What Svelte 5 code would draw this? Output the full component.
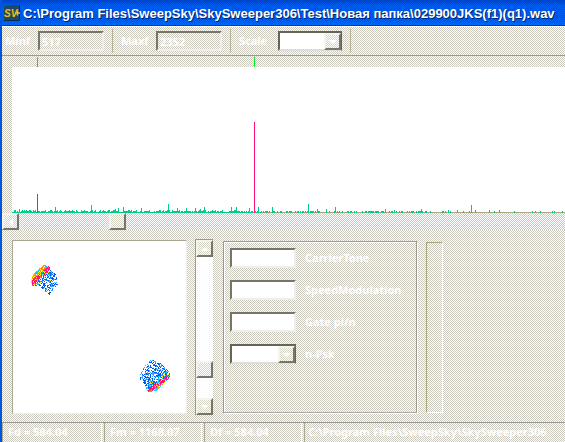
<script>
  const path = 'C:\\Program Files\\SweepSky\\SkySweeper306\\Test\\Новая папка\\029900JKS(f1)(q1).wav';
  const status = ['Fd = 584.04', 'Fm = 1168.07', 'Df = 584.04', 'C:\\Program Files\\SweepSky\\SkySweeper306'];
  const fields = ['CarrierTone', 'SpeedModulation', 'Gate pi/n'];

  function seeded(seed) {
    let s = seed;
    return () => {
      s = (s * 1664525 + 1013904223) % 4294967296;
      return s / 4294967296;
    };
  }

  // Noise floor, one bar per pixel column, with the stronger lines on top
  const peaks = { 7: 4, 43: 6, 79: 8, 83: 3, 97: 3, 103: 4, 106: 5, 111: 6, 129: 5, 156: 9, 165: 5, 174: 5, 183: 5, 188: 4, 192: 6, 219: 6, 224: 6, 237: 5, 246: 6, 260: 6, 296: 9, 305: 4, 314: 4, 323: 6, 373: 4, 382: 3, 409: 4, 436: 3, 445: 3, 459: 8, 463: 3, 477: 3, 487: 3 };
  const rnd = seeded(41);
  const bars = [];
  for (let x = 1; x < 900; x++) {
    const r = rnd();
    let h = x < 250 ? (r < 0.3 ? 1 : r < 0.8 ? 2 : 3) : x < 420 ? (r < 0.45 ? 2 : 0) : r < 0.13 ? 2 : 0;
    if (peaks[x]) h = peaks[x];
    if (h) bars.push({ x, h });
  }

  // Each cloud: an outline, a hot edge and a scatter that thins out away from it
  function inside(poly, x, y) {
    let hit = false;
    for (let i = 0, j = poly.length - 1; i < poly.length; j = i++) {
      const [a, b] = poly[i];
      const [c, d] = poly[j];
      if (b > y !== d > y && x < ((c - a) * (y - b)) / (d - b) + a) hit = !hit;
    }
    return hit;
  }
  function cloud(poly, ax, ay, bx, by, seed) {
    const rand = seeded(seed);
    const out = [];
    const len = Math.hypot(bx - ax, by - ay);
    for (let y = 20; y < 156; y++) {
      for (let x = 14; x < 164; x++) {
        if (!inside(poly, x + 0.5, y + 0.5)) continue;
        const d = ((bx - ax) * (y - ay) - (by - ay) * (x - ax)) / len;
        const r = rand();
        const q = rand();
        let c = '';
        if (d < 1) c = r < 0.4 ? '#ff9900' : r < 0.65 ? '#00ccff' : r < 0.85 ? '#ffee00' : '';
        else if (d < 5) c = r < 0.65 ? '#ff1177' : r < 0.8 ? '#ff7700' : r < 0.9 ? '#ffee00' : '#33ddcc';
        else if (d < 9) c = q < 0.2 ? '' : r < 0.2 ? '#ffdd00' : r < 0.5 ? '#00ccff' : '#0066ff';
        else c = q < (d < 19 ? 0.38 : 0.6) ? '' : r < 0.35 ? '#33aaff' : r < 0.39 ? '#ffee00' : '#0055ee';
        if (c) out.push({ x, y, c });
      }
    }
    return out;
  }
  const dots = [
    ...cloud([[18, 40], [20, 33], [27, 27], [31, 24], [36, 25], [38, 30], [43, 33], [45, 43], [40, 49], [37, 54], [30, 49], [26, 44], [20, 46]], 19, 37, 34, 24, 7),
    ...cloud([[126, 137], [131, 125], [139, 118], [144, 121], [148, 122], [157, 131], [157, 136], [150, 144], [143, 150], [135, 151], [132, 145]], 157, 137, 137, 152, 19)
  ];
</script>

<div class="window">
  <header>
    <svg class="logo" width="16" height="16" viewBox="0 0 16 16" aria-hidden="true">
      <rect width="16" height="16" fill="#1c4a66" />
      <path d="M0 15.5H16M15.5 0V16" stroke="#0a2850" />
      <text x="0" y="12" font-family="Liberation Sans, sans-serif" font-size="10" font-weight="bold" font-style="italic" fill="#eebb22">SV</text>
      <path d="M11 8h5M13.5 5.500v5" stroke="#eebb22" stroke-width="1.500" />
    </svg>
    <h1>{path}</h1>
  </header>

  <div class="toolbar">
    <div class="tool"><label for="minf">Minf</label><input id="minf" value="517" /></div>
    <div class="tool"><label for="maxf">Maxf</label><input id="maxf" value="2352" /></div>
    <div class="tool">
      <label for="scale">Scale</label>
      <span class="combo"><select id="scale"><option></option></select><i class="face"><b class="down"></b></i></span>
    </div>
  </div>

  <svg class="ticks" width="100%" height="11" aria-hidden="true">
    <path d="M35.500 1V11M252.500 1V11" stroke="#00ee22" />
  </svg>
  <div class="spectrum">
    <svg width="100%" height="146" aria-label="Spectrum">
      <rect y="145" width="100%" height="1" fill="#aaa67c" />
      <rect y="145" width="245" height="1" fill="#00cc88" />
      {#each bars as b}
        <rect x={b.x} y={146 - b.h} width="1" height={b.h} fill="#00cc88" />
      {/each}
      <rect x="25" y="127" width="1" height="19" fill="#ff1177" />
      <rect x="242" y="55" width="1" height="91" fill="#ff1177" />
    </svg>
  </div>
  <div class="hscroll">
    <button class="face" aria-label="Scroll left"><b class="left"></b></button>
    <button class="face" aria-label="Position"></button>
  </div>

  <main>
    <div class="phase">
      <svg width="173" height="172" aria-label="Phase plane" shape-rendering="crispEdges">
        {#each dots as d}
          <rect x={d.x} y={d.y} width="1" height="1" fill={d.c} />
        {/each}
      </svg>
    </div>
    <div class="vscroll">
      <button class="face" aria-label="Scroll up"><b class="up"></b></button>
      <button class="face thumb" aria-label="Level"></button>
      <button class="face" aria-label="Scroll down"><b class="down"></b></button>
    </div>
    <div class="group">
      {#each fields as name, i}
        <div class="field"><input id="field{i}" /><label for="field{i}">{name}</label></div>
      {/each}
      <div class="field">
        <span class="combo"><select id="psk"><option></option></select><i class="face"><b class="down"></b></i></span>
        <label for="psk">n-Psk</label>
      </div>
    </div>
    <div class="meter"></div>
  </main>

  <footer>
    {#each status as s}<span>{s}</span>{/each}
  </footer>
</div>

<style>
  :global(body) {
    margin: 0;
    overflow: hidden;
  }
  .window {
    box-sizing: border-box;
    min-height: 100vh;
    display: flex;
    flex-direction: column;
    border-left: 2px solid #0055e0;
    font: bold 11px/16px 'Noto Sans', 'DejaVu Sans', sans-serif;
    color: #fff;
    overflow: hidden;
    background:
      conic-gradient(from 0deg at 3px 1px, #ffffcc 25%, transparent 0) 0 0 / 4px 4px,
      repeating-conic-gradient(#fff 0 25%, #ccc9be 0 50%) 0 0 / 2px 2px;
  }
  header {
    display: flex;
    align-items: center;
    gap: 3px;
    height: 26px;
    margin-left: -2px;
    padding-left: 4px;
    box-sizing: border-box;
    border-bottom: 1px solid #003c9c;
    background:
      repeating-conic-gradient(#0033cc60 0 25%, transparent 0 50%) 0 0 / 2px 2px,
      linear-gradient(#0044c8, #0060f4 6px, #005cf0 18px, #0070ff);
  }
  .logo {
    flex: none;
  }
  h1 {
    margin: 0;
    padding-top: 2px;
    font: bold 13px/18px 'Liberation Sans', sans-serif;
    white-space: nowrap;
    text-shadow: 1px 1px 0 #002266;
  }
  .toolbar {
    display: flex;
    height: 28px;
    border-top: 1px solid #fff;
    border-bottom: 1px solid #999;
  }
  .tool {
    display: flex;
    align-items: center;
    justify-content: space-between;
    box-sizing: border-box;
    width: 118px;
    margin: 2px 0;
    padding: 0 8px;
    border-right: 1px solid #b5b394;
  }
  .tool:first-child {
    width: 111px;
    padding-left: 3px;
  }
  .tool:last-child {
    width: 120px;
  }
  input,
  select {
    box-sizing: border-box;
    width: 66px;
    height: 20px;
    margin: 0;
    padding: 0 2px;
    border: 2px solid;
    border-color: #77756a #eee #eee #77756a;
    border-radius: 0;
    outline: 0;
    appearance: none;
    background: #fff;
    color: #fff;
    font: inherit;
  }
  .tool input {
    background: none;
  }
  .combo {
    position: relative;
    display: flex;
  }
  .tool select {
    width: 64px;
  }
  select {
    border-color: #66645a;
    border-bottom-color: #ddd;
  }
  .face {
    display: flex;
    align-items: center;
    justify-content: center;
    flex: none;
    box-sizing: border-box;
    width: 17px;
    height: 17px;
    padding: 0;
    border: 2px solid;
    border-color: #f4f4e8 #77756a #77756a #f4f4e8;
    background: repeating-conic-gradient(#fff 0 25%, #d4d4c4 0 50%) 0 0 / 2px 2px;
  }
  .combo .face {
    position: absolute;
    top: 2px;
    right: 1px;
    pointer-events: none;
  }
  .down,
  .up {
    border: 4px solid transparent;
    border-bottom: 0;
    border-top-color: #fff;
  }
  .up {
    transform: rotate(180deg);
  }
  .left {
    border: 4px solid transparent;
    border-left: 0;
    border-right-color: #fff;
  }
  svg {
    display: block;
  }
  .spectrum {
    margin-left: 10px;
    background: #fff;
  }
  .hscroll {
    display: flex;
    gap: 90px;
    height: 17px;
    background: repeating-conic-gradient(#fff 0 25%, #ccc8c8 0 50%) 0 0 / 2px 2px;
  }
  main {
    display: flex;
    align-items: flex-start;
    padding: 9px 0 7px 10px;
  }
  .phase {
    margin-top: 1px;
    border: 1px solid #aaa890;
    border-right-color: #eee;
    border-bottom-color: #eee;
    background: #fff;
  }
  .vscroll {
    display: flex;
    flex-direction: column;
    box-sizing: border-box;
    width: 18px;
    height: 176px;
    margin-left: 8px;
    border-left: 1px solid #999;
    border-top: 1px solid #999;
    background: conic-gradient(from 0deg at 1px 1px, #ffffcc 25%, #fff 0) 0 0 / 2px 2px;
  }
  .thumb {
    margin: auto 0 20px;
  }
  .group {
    display: flex;
    flex-direction: column;
    gap: 12px;
    box-sizing: border-box;
    width: 194px;
    height: 172px;
    margin: 2px 0 0 10px;
    padding: 6px;
    border: 1px solid #9c9a90;
    border-bottom-color: #aaa;
    box-shadow: inset 1px 1px #fff, 1px 1px #fff;
  }
  .field {
    display: flex;
    align-items: center;
    gap: 9px;
    white-space: nowrap;
  }
  .meter {
    box-sizing: border-box;
    width: 17px;
    height: 171px;
    margin: 3px 0 0 9px;
    border: 1px solid #aaa678;
    border-right-color: #fff;
    border-bottom-color: #fff;
  }
  footer {
    display: flex;
    flex: 1;
    gap: 2px;
    min-height: 19px;
    border-top: 1px solid #999;
    box-sizing: border-box;
  }
  footer span {
    flex: none;
    box-sizing: border-box;
    width: 98px;
    padding-left: 5px;
    border-left: 1px solid #aaa890;
    border-right: 1px solid #fff;
    line-height: 18px;
    white-space: nowrap;
    overflow: hidden;
  }
  footer span:first-child {
    width: 100px;
  }
  footer span:last-child {
    flex: 1;
    width: auto;
    padding-left: 3px;
    border-right: 0;
  }
</style>
